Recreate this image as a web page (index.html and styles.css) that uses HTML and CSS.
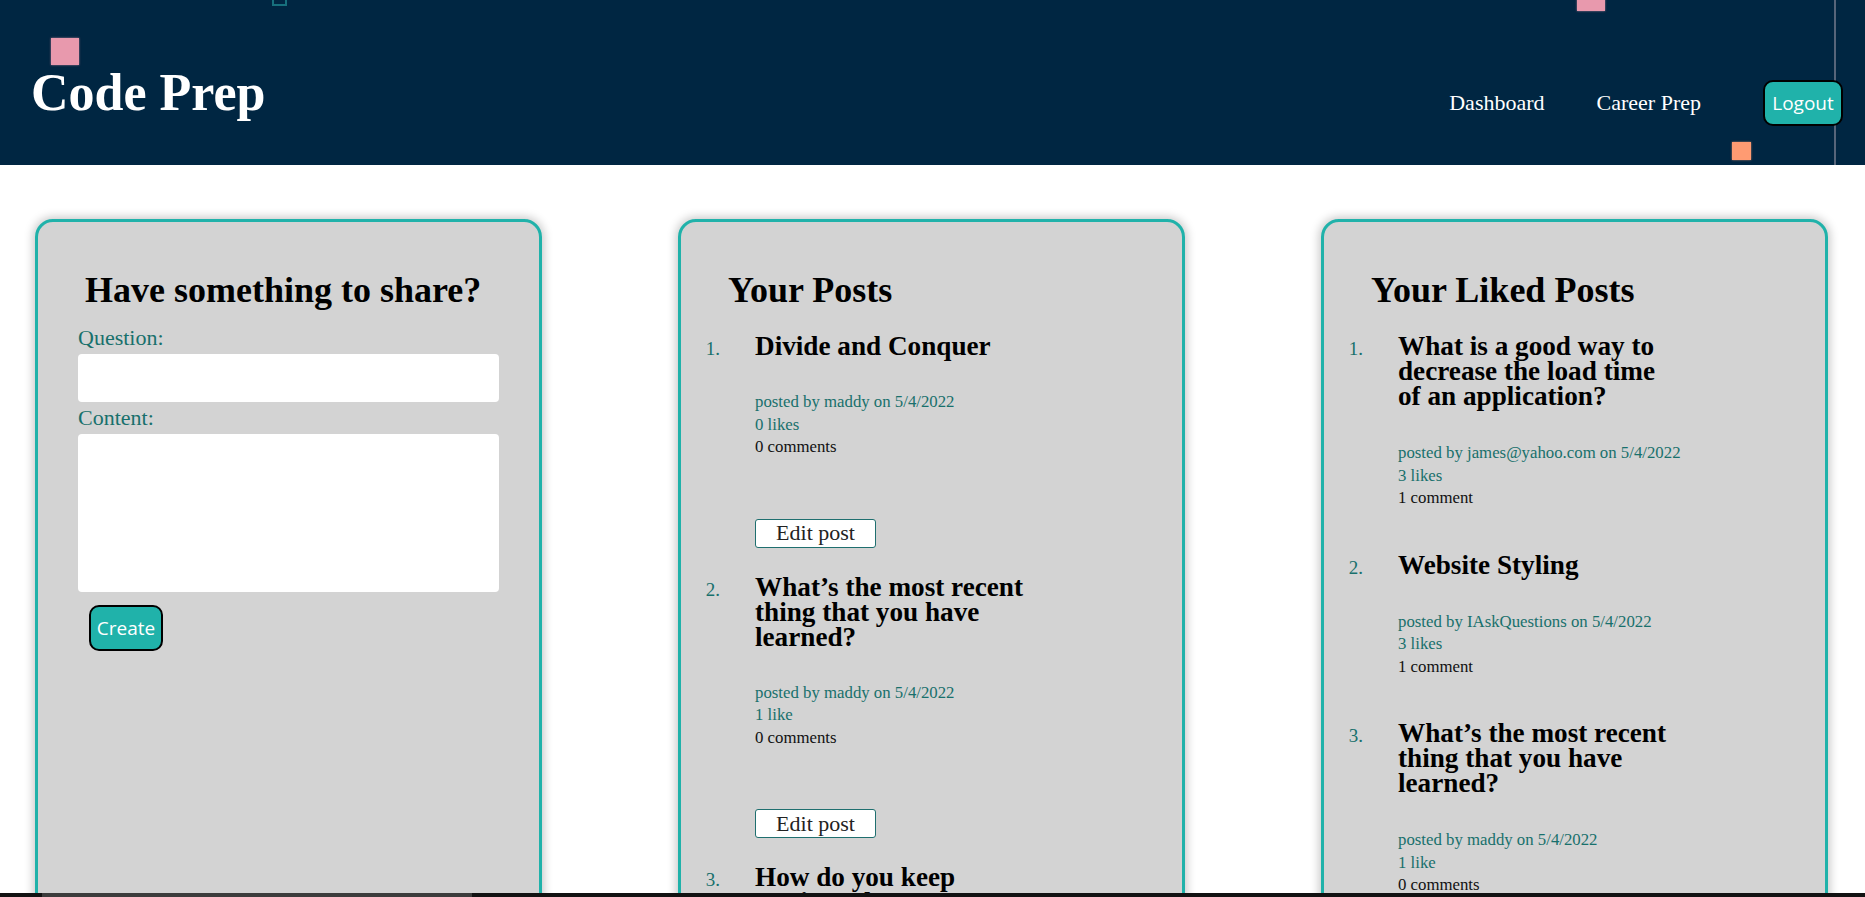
FILE: index.html
```html
<!DOCTYPE html>
<html lang="en">
<head>
<meta charset="utf-8">
<title>Code Prep</title>
<link rel="stylesheet" href="styles.css">
</head>
<body>
<header class="site-header">
  <span class="deco deco-pink-a"></span>
  <span class="deco deco-outline"></span>
  <span class="deco deco-pink-b"></span>
  <span class="deco deco-orange"></span>
  <span class="deco deco-line"></span>
  <h1 class="brand">Code Prep</h1>
  <nav class="nav">
    <a class="nav-link" href="#">Dashboard</a>
    <a class="nav-link" href="#">Career Prep</a>
    <button class="btn-teal logout" type="button">Logout</button>
  </nav>
</header>

<main class="board">
  <section class="card">
    <h2 class="card-title">Have something to share?</h2>
    <form class="post-form">
      <label class="field-label" for="question">Question:</label>
      <input class="field-input" id="question" type="text">
      <label class="field-label" for="content">Content:</label>
      <textarea class="field-area" id="content"></textarea>
      <button class="btn-teal create-btn" type="button">Create</button>
    </form>
  </section>

  <section class="card own">
    <h2 class="card-title">Your Posts</h2>
    <ol class="post-list">
      <li class="post-item">
        <div class="post-body">
          <h3 class="post-title">Divide and Conquer</h3>
          <div class="meta">
            <p class="meta-author">posted by maddy on 5/4/2022</p>
            <p class="meta-likes">0 likes</p>
            <p class="meta-comments">0 comments</p>
          </div>
          <button class="edit-btn" type="button">Edit post</button>
        </div>
      </li>
      <li class="post-item">
        <div class="post-body">
          <h3 class="post-title">What’s the most recent thing that you have learned?</h3>
          <div class="meta">
            <p class="meta-author">posted by maddy on 5/4/2022</p>
            <p class="meta-likes">1 like</p>
            <p class="meta-comments">0 comments</p>
          </div>
          <button class="edit-btn" type="button">Edit post</button>
        </div>
      </li>
      <li class="post-item">
        <div class="post-body">
          <h3 class="post-title">How do you keep motivated?</h3>
          <div class="meta">
            <p class="meta-author">posted by maddy on 5/4/2022</p>
            <p class="meta-likes">0 likes</p>
            <p class="meta-comments">0 comments</p>
          </div>
          <button class="edit-btn" type="button">Edit post</button>
        </div>
      </li>
    </ol>
  </section>

  <section class="card liked">
    <h2 class="card-title">Your Liked Posts</h2>
    <ol class="post-list">
      <li class="post-item">
        <div class="post-body">
          <h3 class="post-title">What is a good way to decrease the load time of an application?</h3>
          <div class="meta">
            <p class="meta-author">posted by james@yahoo.com on 5/4/2022</p>
            <p class="meta-likes">3 likes</p>
            <p class="meta-comments">1 comment</p>
          </div>
        </div>
      </li>
      <li class="post-item">
        <div class="post-body">
          <h3 class="post-title">Website Styling</h3>
          <div class="meta">
            <p class="meta-author">posted by IAskQuestions on 5/4/2022</p>
            <p class="meta-likes">3 likes</p>
            <p class="meta-comments">1 comment</p>
          </div>
        </div>
      </li>
      <li class="post-item">
        <div class="post-body">
          <h3 class="post-title">What’s the most recent thing that you have learned?</h3>
          <div class="meta">
            <p class="meta-author">posted by maddy on 5/4/2022</p>
            <p class="meta-likes">1 like</p>
            <p class="meta-comments">0 comments</p>
          </div>
        </div>
      </li>
    </ol>
  </section>
</main>

<div class="hscroll"><div class="hscroll-thumb"></div></div>
</body>
</html>
```

FILE: styles.css
```css
* { box-sizing: border-box; }

html, body {
  margin: 0;
  height: 100%;
  overflow: hidden;
}

body {
  font-family: "Liberation Serif", "Times New Roman", serif;
  background: #ffffff;
  color: #000000;
}

/* ---------- header ---------- */
.site-header {
  position: relative;
  height: 165px;
  background: #002642;
  display: flex;
  justify-content: space-between;
  align-items: flex-start;
  padding: 0 22px 0 31px;
  overflow: hidden;
}

.brand {
  position: relative;
  z-index: 1;
  margin: 63px 0 0;
  font-size: 52px;
  line-height: 60px;
  font-weight: bold;
  color: #ffffff;
}

.nav {
  position: relative;
  z-index: 1;
  margin-top: 80px;
  height: 46px;
  display: flex;
  align-items: center;
  gap: 52px;
}

.nav-link {
  color: #ffffff;
  text-decoration: none;
  font-size: 22px;
  line-height: 26px;
}

.btn-teal {
  background: #20b2aa;
  color: #ffffff;
  border: 2px solid #000000;
  border-radius: 10px;
  font-family: "Open Sans", "Noto Sans", sans-serif;
  font-size: 19px;
  height: 46px;
  padding: 0;
}

.logout {
  width: 80px;
  margin-left: 10px;
}

.deco { position: absolute; display: block; }

.deco-pink-a {
  left: 51px; top: 38px; width: 28px; height: 27px;
  background: #e899ad;
  box-shadow: 0 0 2px rgba(232, 153, 173, 0.7);
}

.deco-outline {
  left: 272px; top: -9px; width: 15px; height: 15px;
  border: 2px solid #17707d;
}

.deco-pink-b {
  left: 1577px; top: -17px; width: 28px; height: 28px;
  background: #e899ad;
  box-shadow: 0 0 2px rgba(232, 153, 173, 0.7);
}

.deco-orange {
  left: 1732px; top: 142px; width: 19px; height: 18px;
  background: #ff9b72;
  box-shadow: 0 0 2px rgba(255, 155, 114, 0.7);
}

.deco-line {
  left: 1834px; top: 0; width: 2px; height: 165px;
  background: #56657a;
}

/* ---------- cards ---------- */
.board {
  display: flex;
  align-items: stretch;
  gap: 136px;
  padding: 54px 37px 0 35px;
}

.card {
  flex: none;
  width: 507px;
  background: #d3d3d3;
  border: 3px solid #20b2aa;
  border-radius: 18px;
  box-shadow: 0 0 10px 2px rgba(0, 0, 0, 0.22);
  padding: 48px 40px 80px;
}

.card-title {
  margin: 0;
  padding-left: 7px;
  font-size: 36px;
  line-height: 40px;
  font-weight: bold;
}

/* form */
.post-form { margin-top: 15px; }

.field-label {
  display: block;
  margin: 0 0 3px;
  font-size: 22px;
  line-height: 26px;
  color: #18706c;
}

.field-input,
.field-area {
  display: block;
  width: 100%;
  border: none;
  border-radius: 4px;
  background: #ffffff;
  font: inherit;
}

.field-input { height: 48px; margin-bottom: 3px; }

.field-area { height: 158px; resize: none; }

.create-btn {
  display: block;
  width: 74px;
  margin: 13px 0 0 11px;
}

/* post lists */
.post-list {
  list-style: none;
  margin: 24px 0 0 -23px;
  padding: 0;
  counter-reset: post;
}

.post-item {
  counter-increment: post;
  display: grid;
  grid-template-columns: 22px 1fr;
  column-gap: 35px;
  align-items: baseline;
}

.post-item::before {
  content: counter(post) ".";
  text-align: right;
  color: #18706c;
  font-size: 19px;
}

.own .post-item { margin-bottom: 27px; }
.liked .post-item { margin-bottom: 43px; }

.post-title {
  margin: 0;
  width: 276px;
  font-size: 27.2px;
  line-height: 25px;
  font-weight: bold;
}

.meta p {
  margin: 0;
  font-size: 16.8px;
  line-height: 22.5px;
}

.own .meta { margin-top: 32px; }
.liked .meta { margin-top: 33px; }

.meta-author,
.meta-likes { color: #18706c; }

.meta-comments { color: #111111; }

.edit-btn {
  display: block;
  margin-top: 60px;
  width: 121px;
  height: 29px;
  padding: 0;
  background: #ffffff;
  border: 1px solid #1f6f6f;
  border-radius: 3px;
  font-family: "Liberation Serif", "Times New Roman", serif;
  font-size: 22px;
  color: #222222;
}

/* bottom strip */
.hscroll {
  position: fixed;
  left: 0;
  right: 0;
  bottom: 0;
  height: 4px;
  background: #121212;
}

.hscroll-thumb {
  margin-left: 42px;
  width: 430px;
  height: 100%;
  background: #3c3c3c;
}
```
